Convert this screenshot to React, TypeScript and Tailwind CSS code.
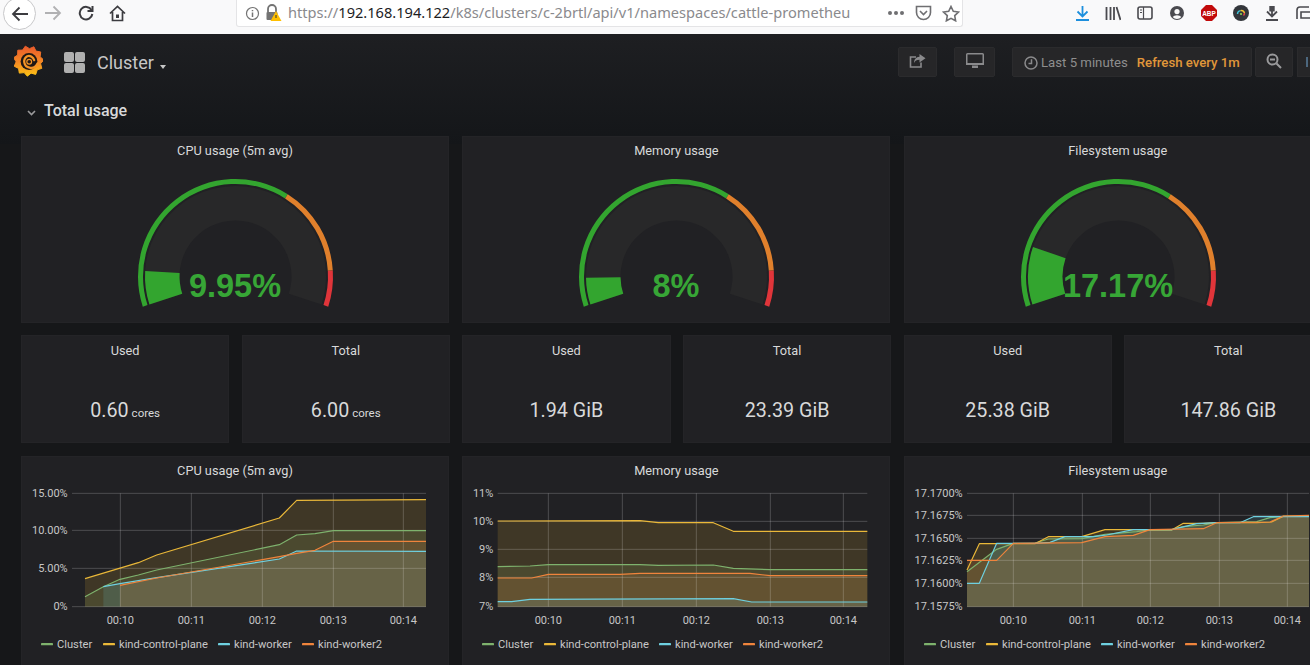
import React from "react";

const polar = (cx: number, cy: number, r: number, deg: number) => {
  const a = ((deg - 90) * Math.PI) / 180;
  return [cx + r * Math.cos(a), cy + r * Math.sin(a)];
};
const sector = (cx: number, cy: number, r0: number, r1: number, a0: number, a1: number) => {
  const [x0, y0] = polar(cx, cy, r1, a0);
  const [x1, y1] = polar(cx, cy, r1, a1);
  const [x2, y2] = polar(cx, cy, r0, a1);
  const [x3, y3] = polar(cx, cy, r0, a0);
  const large = a1 - a0 > 180 ? 1 : 0;
  return `M${x0} ${y0}A${r1} ${r1} 0 ${large} 1 ${x1} ${y1}L${x2} ${y2}A${r0} ${r0} 0 ${large} 0 ${x3} ${y3}Z`;
};

function Gauge({ value, label }: { value: number; label: string }) {
  const cx = 214.5;
  const cy = 141.5;
  const at = (f: number) => -108 + 216 * f;
  return (
    <svg width="428" height="150" viewBox="0 37 428 150" className="block">
      <path d={sector(cx, cy, 56, 90.5, at(0), at(1))} fill="#282829" />
      <path d={sector(cx, cy, 56, 90.5, at(0), at(value))} fill="#33a52f" />
      <path d={sector(cx, cy, 92.5, 97.5, at(0), at(0.65))} fill="#33a52f" />
      <path d={sector(cx, cy, 92.5, 97.5, at(0.65), at(0.9))} fill="#e0802c" />
      <path d={sector(cx, cy, 92.5, 97.5, at(0.9), at(1))} fill="#e0353a" />
      <text
        x={cx - 0.5}
        y={162}
        textAnchor="middle"
        fontSize="32.5"
        fontWeight="700"
        fill="#37a636"
        className="[font-family:'Liberation_Sans',sans-serif]"
      >
        {label}
      </text>
    </svg>
  );
}

function GaugePanel({ title, value, label }: { title: string; value: number; label: string }) {
  return (
    <div className="w-[428px] h-[187px] shrink-0 bg-[#212124] border border-[#242427] flex flex-col items-center">
      <div className="h-[28px] flex items-center text-[12.75px] text-[#d8d9da]">{title}</div>
      <div className="mt-[8px] -mx-px">
        <Gauge value={value} label={label} />
      </div>
    </div>
  );
}

function StatPanel({ title, value, unit }: { title: string; value: string; unit?: string }) {
  return (
    <div className="w-[208.25px] h-[108px] shrink-0 bg-[#212124] border border-[#242427] flex flex-col items-center">
      <div className="h-[29px] pt-[1px] flex items-center text-[12.75px] text-[#d8d9da]">{title}</div>
      <div className="mt-[34px] flex items-baseline text-[19.7px] leading-[24px] text-[#d8d9da]">
        {value}
        {unit && <span className="ml-[3px] text-[11.5px]">{unit}</span>}
      </div>
    </div>
  );
}

type Series = { c: string; p: number[][] };

function Chart({
  title,
  ox,
  plotL,
  plotR,
  hs,
  vs,
  ylabels,
  series,
  legend,
}: {
  title: string;
  ox: number;
  plotL: number;
  plotR: number;
  hs: number[];
  vs: { x: number; t: string }[];
  ylabels: string[];
  series: Series[];
  legend: number[];
}) {
  const names = ["Cluster", "kind-control-plane", "kind-worker", "kind-worker2"];
  const colors = ["#7eb26d", "#eab839", "#6ed0e0", "#ef843c"];
  return (
    <div className="w-[428px] h-[215px] shrink-0 bg-[#212124] border border-[#242427] flex flex-col items-center">
      <div className="h-[28px] flex items-center text-[12.75px] text-[#d8d9da]">{title}</div>
      <svg width="426" height="170" viewBox={`${ox} 84 1278 510`} className="block -mt-[2px]">
        {series.map((s) => (
          <path
            key={s.c}
            d={`M${s.p[0][0]} 455L${s.p.map((q) => q.join(" ")).join("L")}L${s.p[s.p.length - 1][0]} 455Z`}
            fill={s.c}
            fillOpacity="0.15"
          />
        ))}
        {hs.map((y) => (
          <line key={y} x1={plotL} x2={plotR} y1={y} y2={y} stroke="#ffffff" strokeOpacity="0.2" strokeWidth="3" />
        ))}
        {vs.map((v) => (
          <line key={v.x} x1={v.x} x2={v.x} y1={115} y2={455} stroke="#ffffff" strokeOpacity="0.2" strokeWidth="3" />
        ))}
        {series.map((s) => (
          <polyline
            key={s.c}
            points={s.p.map((q) => q.join(",")).join(" ")}
            fill="none"
            stroke={s.c}
            strokeWidth="3.5"
            strokeLinejoin="round"
          />
        ))}
        {hs.map((y, i) => (
          <text key={y} x={plotL - 13} y={y + 11} textAnchor="end" fontSize="33" fill="#c7c7c7">
            {ylabels[i]}
          </text>
        ))}
        {vs.map((v) => (
          <text key={v.x} x={v.x} y={506} textAnchor="middle" fontSize="33" fill="#c7c7c7">
            {v.t}
          </text>
        ))}
        {names.map((n, i) => (
          <g key={n}>
            <rect x={legend[i]} y={564} width={36} height={7} rx={2} fill={colors[i]} />
            <text x={legend[i] + 48} y={578} fontSize="33.5" fill="#c7c7c7">
              {n}
            </text>
          </g>
        ))}
      </svg>
    </div>
  );
}

const cpu: Series[] = [
  { c: "#7eb26d", p: [[255, 425], [310, 395], [360, 373], [415, 360], [470, 345], [838, 269], [890, 240], [945, 236], [1000, 227], [1278, 227]] },
  { c: "#eab839", p: [[255, 371], [415, 323], [470, 300], [838, 189], [890, 136], [1278, 134]] },
  { c: "#6ed0e0", p: [[310, 395], [360, 386], [470, 368], [838, 312], [890, 288], [1278, 289]] },
  { c: "#ef843c", p: [[360, 391], [470, 369], [838, 305], [890, 295], [945, 286], [1000, 259], [1278, 259]] },
];
const mem: Series[] = [
  { c: "#7eb26d", p: [[113, 335], [210, 333], [265, 329], [540, 329], [595, 331], [760, 330], [820, 340], [930, 344], [1222, 344]] },
  { c: "#eab839", p: [[113, 198], [540, 197], [595, 203], [760, 203], [820, 229], [1222, 229]] },
  { c: "#6ed0e0", p: [[113, 440], [155, 440], [210, 433], [820, 431], [875, 441], [1222, 441]] },
  { c: "#ef843c", p: [[113, 369], [215, 369], [265, 358], [480, 358], [540, 355], [870, 355], [930, 362], [1222, 362]] },
];
const fs: Series[] = [
  { c: "#7eb26d", p: [[201, 350], [290, 283], [340, 265], [405, 264], [445, 252], [545, 251], [615, 238], [710, 230], [750, 225], [815, 224], [850, 215], [910, 210], [950, 203], [1070, 200], [1110, 188], [1150, 184], [1227, 184]] },
  { c: "#eab839", p: [[201, 345], [238, 266], [405, 266], [445, 245], [545, 245], [615, 224], [710, 224], [745, 225], [815, 225], [850, 205], [910, 205], [950, 203], [1070, 203], [1115, 201], [1150, 184], [1227, 184]] },
  { c: "#6ed0e0", p: [[201, 385], [238, 385], [290, 265], [405, 265], [450, 262], [495, 245], [580, 245], [620, 240], [700, 224], [815, 224], [890, 206], [950, 203], [1020, 203], [1060, 185], [1227, 185]] },
  { c: "#ef843c", p: [[201, 316], [290, 316], [340, 265], [545, 263], [615, 245], [700, 241], [750, 224], [910, 221], [950, 203], [1110, 201], [1150, 183], [1227, 181]] },
];

const Logo = () => {
  const pts: string[] = [];
  const n = 11;
  for (let i = 0; i < n * 2; i++) {
    const r = i % 2 === 0 ? 15.2 : 12.4;
    const [x, y] = polar(14.5, 16, r, (i * 180) / n - 12);
    pts.push(`${x},${y}`);
  }
  return (
    <svg width="29" height="32" viewBox="0 0 29 32" className="block">
      <defs>
        <linearGradient id="gf" x1="0" y1="0" x2="0" y2="1">
          <stop offset="0" stopColor="#ea5a2c" />
          <stop offset="0.55" stopColor="#f58a24" />
          <stop offset="1" stopColor="#fcc414" />
        </linearGradient>
      </defs>
      <polygon points={pts.join(" ")} fill="url(#gf)" stroke="url(#gf)" strokeWidth="1" strokeLinejoin="round" />
      <circle cx="15" cy="16.5" r="8.4" fill="#1f1715" />
      <path
        d="M23.5 18.5C22 22 18.5 23.2 15.5 22.6A6.2 6.2 0 0 1 13.2 11.2A5.6 5.6 0 0 1 20.2 15.2"
        fill="none"
        stroke="#f59426"
        strokeWidth="2.2"
        strokeLinecap="round"
      />
      <circle cx="15.2" cy="16.7" r="2.4" fill="none" stroke="#f59426" strokeWidth="1.2" />
    </svg>
  );
};

const ToolBtn = ({ w, children, ml }: { w: string; children: React.ReactNode; ml: string }) => (
  <div className={`${w} ${ml} h-[30px] pb-[2px] shrink-0 flex items-center justify-center bg-[#262628] border border-[#2b2b2d] rounded-[2px]`}>
    {children}
  </div>
);

export default function App() {
  return (
    <div className="w-[1310px] h-[665px] overflow-hidden bg-[#161719] [font-family:Roboto,sans-serif]">
      {/* Browser toolbar */}
      <div className="h-[34px] bg-[#f9f9fa] flex items-start relative overflow-hidden">
        <div className="w-[33px] h-[33px] ml-[3px] -mt-[3px] shrink-0 rounded-full border border-[#c8c8ca] bg-white flex items-center justify-center">
          <svg width="18" height="16" viewBox="0 0 18 16" fill="none" stroke="#3c3c40" strokeWidth="1.8">
            <path d="M17 8H2M8.5 1.5L2 8l6.5 6.5" />
          </svg>
        </div>
        <svg width="18" height="16" viewBox="0 0 18 16" fill="none" stroke="#b1b1b3" strokeWidth="1.8" className="ml-[8px] mt-[5px] shrink-0">
          <path d="M1 8h15M9.5 1.5L16 8l-6.5 6.5" />
        </svg>
        <svg width="16" height="16" viewBox="0 0 16 16" fill="none" stroke="#3c3c40" strokeWidth="2" className="ml-[16px] mt-[5px] shrink-0">
          <path d="M13.5 5A6.3 6.3 0 1 0 14.3 9" />
          <path d="M14.5 1v5h-5" fill="none" />
        </svg>
        <svg width="17" height="17" viewBox="0 0 17 17" fill="none" stroke="#3c3c40" strokeWidth="1.7" className="ml-[15px] mt-[5px] shrink-0">
          <path d="M1 8.5L8.5 1.5 16 8.5M3.5 7v8.5h10V7" />
          <rect x="7" y="9.5" width="3" height="3.5" fill="#3c3c40" stroke="none" />
        </svg>
        <div className="ml-[110px] w-[727px] h-[27px] shrink-0 bg-white rounded-b-[3px] border-b border-x border-[#e4e4e6] flex items-center pl-[8px]">
          <svg width="15" height="15" viewBox="0 0 15 15" fill="none" stroke="#737373" strokeWidth="1.2" className="shrink-0">
            <circle cx="7.5" cy="7.5" r="6" />
            <path d="M7.5 6.5v4.5M7.5 4v1.3" strokeWidth="1.5" />
          </svg>
          <svg width="17" height="18" viewBox="0 0 17 18" className="ml-[5px] shrink-0">
            <path d="M3 8V5a4 4 0 0 1 8 0v3" fill="none" stroke="#737373" strokeWidth="1.8" />
            <rect x="1.5" y="8" width="11" height="8" rx="1" fill="#737373" />
            <path d="M11 7l5.5 10h-11z" fill="#ffbf00" />
            <path d="M11 11v3" stroke="#333" strokeWidth="1" />
          </svg>
          <div className="ml-[6px] w-[563px] whitespace-nowrap text-[14.6px] text-[#8a8a8d] [font-family:'Noto_Sans',sans-serif] shrink-0">
            https://<span className="text-[#1d1d1f]">192.168.194.122</span>/k8s/clusters/c-2brtl/api/v1/namespaces/cattle-prometheu
          </div>
          <div className="ml-[37px] flex gap-[2px] shrink-0">
            <span className="w-[4px] h-[4px] rounded-full bg-[#6f6f72]" />
            <span className="w-[4px] h-[4px] rounded-full bg-[#6f6f72]" />
            <span className="w-[4px] h-[4px] rounded-full bg-[#6f6f72]" />
          </div>
          <svg width="17" height="16" viewBox="0 0 17 16" fill="none" stroke="#6f6f72" strokeWidth="1.6" className="ml-[11px] shrink-0">
            <path d="M1.5 1.5h14v6a7 7 0 0 1-14 0z" />
            <path d="M5 6l3.5 3.5L12 6" />
          </svg>
          <svg width="18" height="17" viewBox="0 0 18 17" fill="none" stroke="#6f6f72" strokeWidth="1.6" className="ml-[10px] shrink-0">
            <path d="M9 1.5l2.3 4.8 5.2.7-3.8 3.6.9 5.2L9 13.3l-4.6 2.5.9-5.2L1.5 7l5.2-.7z" />
          </svg>
        </div>
        <svg width="15" height="15" viewBox="0 0 15 15" fill="none" stroke="#1d8fdd" strokeWidth="1.8" className="ml-[112px] mt-[6px] shrink-0">
          <path d="M7.5 0v10M2.5 5.5l5 5 5-5M1 14h13" />
        </svg>
        <svg width="16" height="15" viewBox="0 0 16 15" fill="none" stroke="#4a4a4f" strokeWidth="1.8" className="ml-[15px] mt-[6px] shrink-0">
          <path d="M1.5 1v13M5.5 1v13M9 1v13M11.5 1l4 13" />
        </svg>
        <svg width="16" height="14" viewBox="0 0 16 14" fill="none" stroke="#4a4a4f" strokeWidth="1.6" className="ml-[16px] mt-[6px] shrink-0">
          <rect x="1" y="1" width="14" height="12" rx="2" />
          <path d="M6.5 1v12M3 4h2M3 6.5h2" strokeWidth="1.2" />
        </svg>
        <svg width="14" height="14" viewBox="0 0 14 14" className="ml-[17px] mt-[6px] shrink-0">
          <circle cx="7" cy="7" r="7" fill="#4a4a4f" />
          <circle cx="7" cy="5.6" r="2.6" fill="#f9f9fa" />
          <path d="M2.6 11a5 3.4 0 0 1 8.8 0a6 6 0 0 1-8.8 0z" fill="#f9f9fa" />
        </svg>
        <svg width="16" height="16" viewBox="0 0 16 16" className="ml-[17px] mt-[5px] shrink-0">
          <path d="M5 0h6l5 5v6l-5 5H5l-5-5V5z" fill="#c20a0a" />
          <text x="8" y="10.6" textAnchor="middle" fontSize="6.4" fontWeight="700" fill="#fff" className="[font-family:'Liberation_Sans',sans-serif]">ABP</text>
        </svg>
        <svg width="16" height="16" viewBox="0 0 16 16" className="ml-[16px] mt-[5px] shrink-0">
          <circle cx="8" cy="8" r="8" fill="#33363b" />
          <path d="M4.5 9a3.5 3.5 0 0 1 3-3.4" fill="none" stroke="#3fc4d8" strokeWidth="1.4" />
          <path d="M7.5 5.6A3.5 3.5 0 0 1 11.5 8" fill="none" stroke="#f2c230" strokeWidth="1.4" />
          <path d="M11.5 8a3.5 3.5 0 0 1-1 2.5" fill="none" stroke="#e2464a" strokeWidth="1.4" />
          <circle cx="8" cy="9" r="1.1" fill="#8fd14f" />
        </svg>
        <svg width="14" height="15" viewBox="0 0 14 15" fill="none" stroke="#4a4a4f" strokeWidth="1.8" className="ml-[16px] mt-[6px] shrink-0">
          <path d="M7 0v10M5.2 0v5.5M8.8 0v5.5M2 5.5l5 5 5-5M1 14h12" />
        </svg>
        <svg width="16" height="14" viewBox="0 0 16 14" fill="none" stroke="#4a4a4f" strokeWidth="1.6" className="ml-[17px] mt-[6px] shrink-0">
          <path d="M1 13V4a3 3 0 0 1 3-3h9M5 6h10v6H5z" />
        </svg>
      </div>

      {/* Grafana */}
      <div className="h-[631px] bg-gradient-to-b from-[#1e1f22] to-[#141619] bg-[length:100%_110px] bg-no-repeat overflow-hidden">
        <div className="flex items-start pt-[13px] h-[60px]">
          <div className="ml-[14px] -mt-[2px] shrink-0">
            <Logo />
          </div>
          <div className="ml-[21px] mt-[5px] w-[21px] h-[21px] shrink-0 grid grid-cols-2 gap-[1px]">
            <span className="bg-[#b0b0b0] rounded-[2px]" />
            <span className="bg-[#b0b0b0] rounded-[2px]" />
            <span className="bg-[#b0b0b0] rounded-[2px]" />
            <span className="bg-[#b0b0b0] rounded-[2px]" />
          </div>
          <div className="ml-[12px] mt-[4px] text-[18px] leading-[24px] text-[#c7c7c7] shrink-0 w-[58px]">Cluster</div>
          <div className="ml-[5px] mt-[18px] shrink-0 border-x-[3.5px] border-x-transparent border-t-[4px] border-t-[#c7c7c7]" />
          <ToolBtn w="w-[39px]" ml="ml-[732px]">
            <svg width="18" height="16" viewBox="0 0 18 16" fill="none" stroke="#8a8a8c" strokeWidth="1.6">
              <path d="M12 9.5V14H1.5V4H7" />
              <path d="M10.5 1l6 4.2-6 4.2V6.8C7.5 6.8 6 8 5 10c0-3.5 2-6 5.5-6.3z" fill="#8a8a8c" stroke="none" />
            </svg>
          </ToolBtn>
          <ToolBtn w="w-[41px]" ml="ml-[17px]">
            <svg width="18" height="16" viewBox="0 0 18 16">
              <path d="M1.5 0h15A1.5 1.5 0 0 1 18 1.5V12H0V1.5A1.5 1.5 0 0 1 1.5 0z" fill="#8a8a8c" />
              <rect x="1.5" y="1.5" width="15" height="8.5" fill="#262628" />
              <rect x="6" y="12.5" width="6" height="2.5" fill="#8a8a8c" />
            </svg>
          </ToolBtn>
          <div className="ml-[17px] w-[240px] h-[30px] pt-[1px] shrink-0 flex items-center bg-[#262628] border border-[#2b2b2d] rounded-[2px] text-[13.2px]">
            <svg width="14" height="14" viewBox="0 0 14 14" fill="none" stroke="#8a8a8c" strokeWidth="1.5" className="ml-[11px] shrink-0">
              <circle cx="7" cy="7" r="6" />
              <path d="M7.5 3.2V7.5H4.5" />
            </svg>
            <span className="ml-[3px] text-[#8e8e8e] whitespace-nowrap">Last 5 minutes</span>
            <span className="ml-[9px] text-[#e0973a] font-medium whitespace-nowrap">Refresh every 1m</span>
          </div>
          <ToolBtn w="w-[38px]" ml="ml-[3px]">
            <svg width="16" height="16" viewBox="0 0 16 16" fill="none" stroke="#9a9a9c" strokeWidth="2">
              <circle cx="6.5" cy="6.5" r="5" />
              <path d="M10.5 10.5L15 15M4 6.5h5" />
            </svg>
          </ToolBtn>
          <div className="ml-[4px] w-[20px] h-[30px] shrink-0 bg-[#262628] border border-[#2b2b2d] flex items-center pl-[8px]">
            <svg width="6" height="12" viewBox="0 0 6 12" fill="none" stroke="#5a7d9a" strokeWidth="1.5">
              <path d="M1 1v10M5 1v10" />
            </svg>
          </div>
        </div>

        <div className="h-[42px] flex items-start">
          <svg width="9" height="6" viewBox="0 0 9 6" fill="none" stroke="#9a9a9c" strokeWidth="1.6" className="ml-[27px] mt-[16px] shrink-0">
            <path d="M1 1l3.5 3.5L8 1" />
          </svg>
          <div className="ml-[8px] mt-[6px] text-[16px] leading-[22px] font-medium text-[#d8d9da]">Total usage</div>
        </div>

        <div className="pl-[21px] flex gap-[13.4px]">
          <GaugePanel title="CPU usage (5m avg)" value={0.0995} label="9.95%" />
          <GaugePanel title="Memory usage" value={0.08} label="8%" />
          <GaugePanel title="Filesystem usage" value={0.1717} label="17.17%" />
        </div>

        <div className="pl-[21px] mt-[12px] flex gap-[12.4px]">
          <StatPanel title="Used" value="0.60" unit="cores" />
          <StatPanel title="Total" value="6.00" unit="cores" />
          <StatPanel title="Used" value="1.94 GiB" />
          <StatPanel title="Total" value="23.39 GiB" />
          <StatPanel title="Used" value="25.38 GiB" />
          <StatPanel title="Total" value="147.86 GiB" />
        </div>

        <div className="pl-[21px] mt-[13px] flex gap-[13.4px]">
          <Chart
            title="CPU usage (5m avg)"
            ox={66}
            plotL={216}
            plotR={1278}
            hs={[115, 226, 340, 455]}
            ylabels={["15.00%", "10.00%", "5.00%", "0%"]}
            vs={[
              { x: 361, t: "00:10" },
              { x: 574, t: "00:11" },
              { x: 787, t: "00:12" },
              { x: 1000, t: "00:13" },
              { x: 1210, t: "00:14" },
            ]}
            series={cpu}
            legend={[123, 309, 654, 906]}
          />
          <Chart
            title="Memory usage"
            ox={9}
            plotL={113}
            plotR={1222}
            hs={[115, 199, 283, 367, 455]}
            ylabels={["11%", "10%", "9%", "8%", "7%"]}
            vs={[
              { x: 265, t: "00:10" },
              { x: 487, t: "00:11" },
              { x: 709, t: "00:12" },
              { x: 931, t: "00:13" },
              { x: 1150, t: "00:14" },
            ]}
            series={mem}
            legend={[66, 252, 597, 849]}
          />
          <Chart
            title="Filesystem usage"
            ox={15}
            plotL={201}
            plotR={1227}
            hs={[115, 181, 250, 316, 385, 455]}
            ylabels={["17.1700%", "17.1675%", "17.1650%", "17.1625%", "17.1600%", "17.1575%"]}
            vs={[
              { x: 340, t: "00:10" },
              { x: 547, t: "00:11" },
              { x: 751, t: "00:12" },
              { x: 958, t: "00:13" },
              { x: 1162, t: "00:14" },
            ]}
            series={fs}
            legend={[72, 258, 603, 855]}
          />
        </div>
      </div>
    </div>
  );
}
